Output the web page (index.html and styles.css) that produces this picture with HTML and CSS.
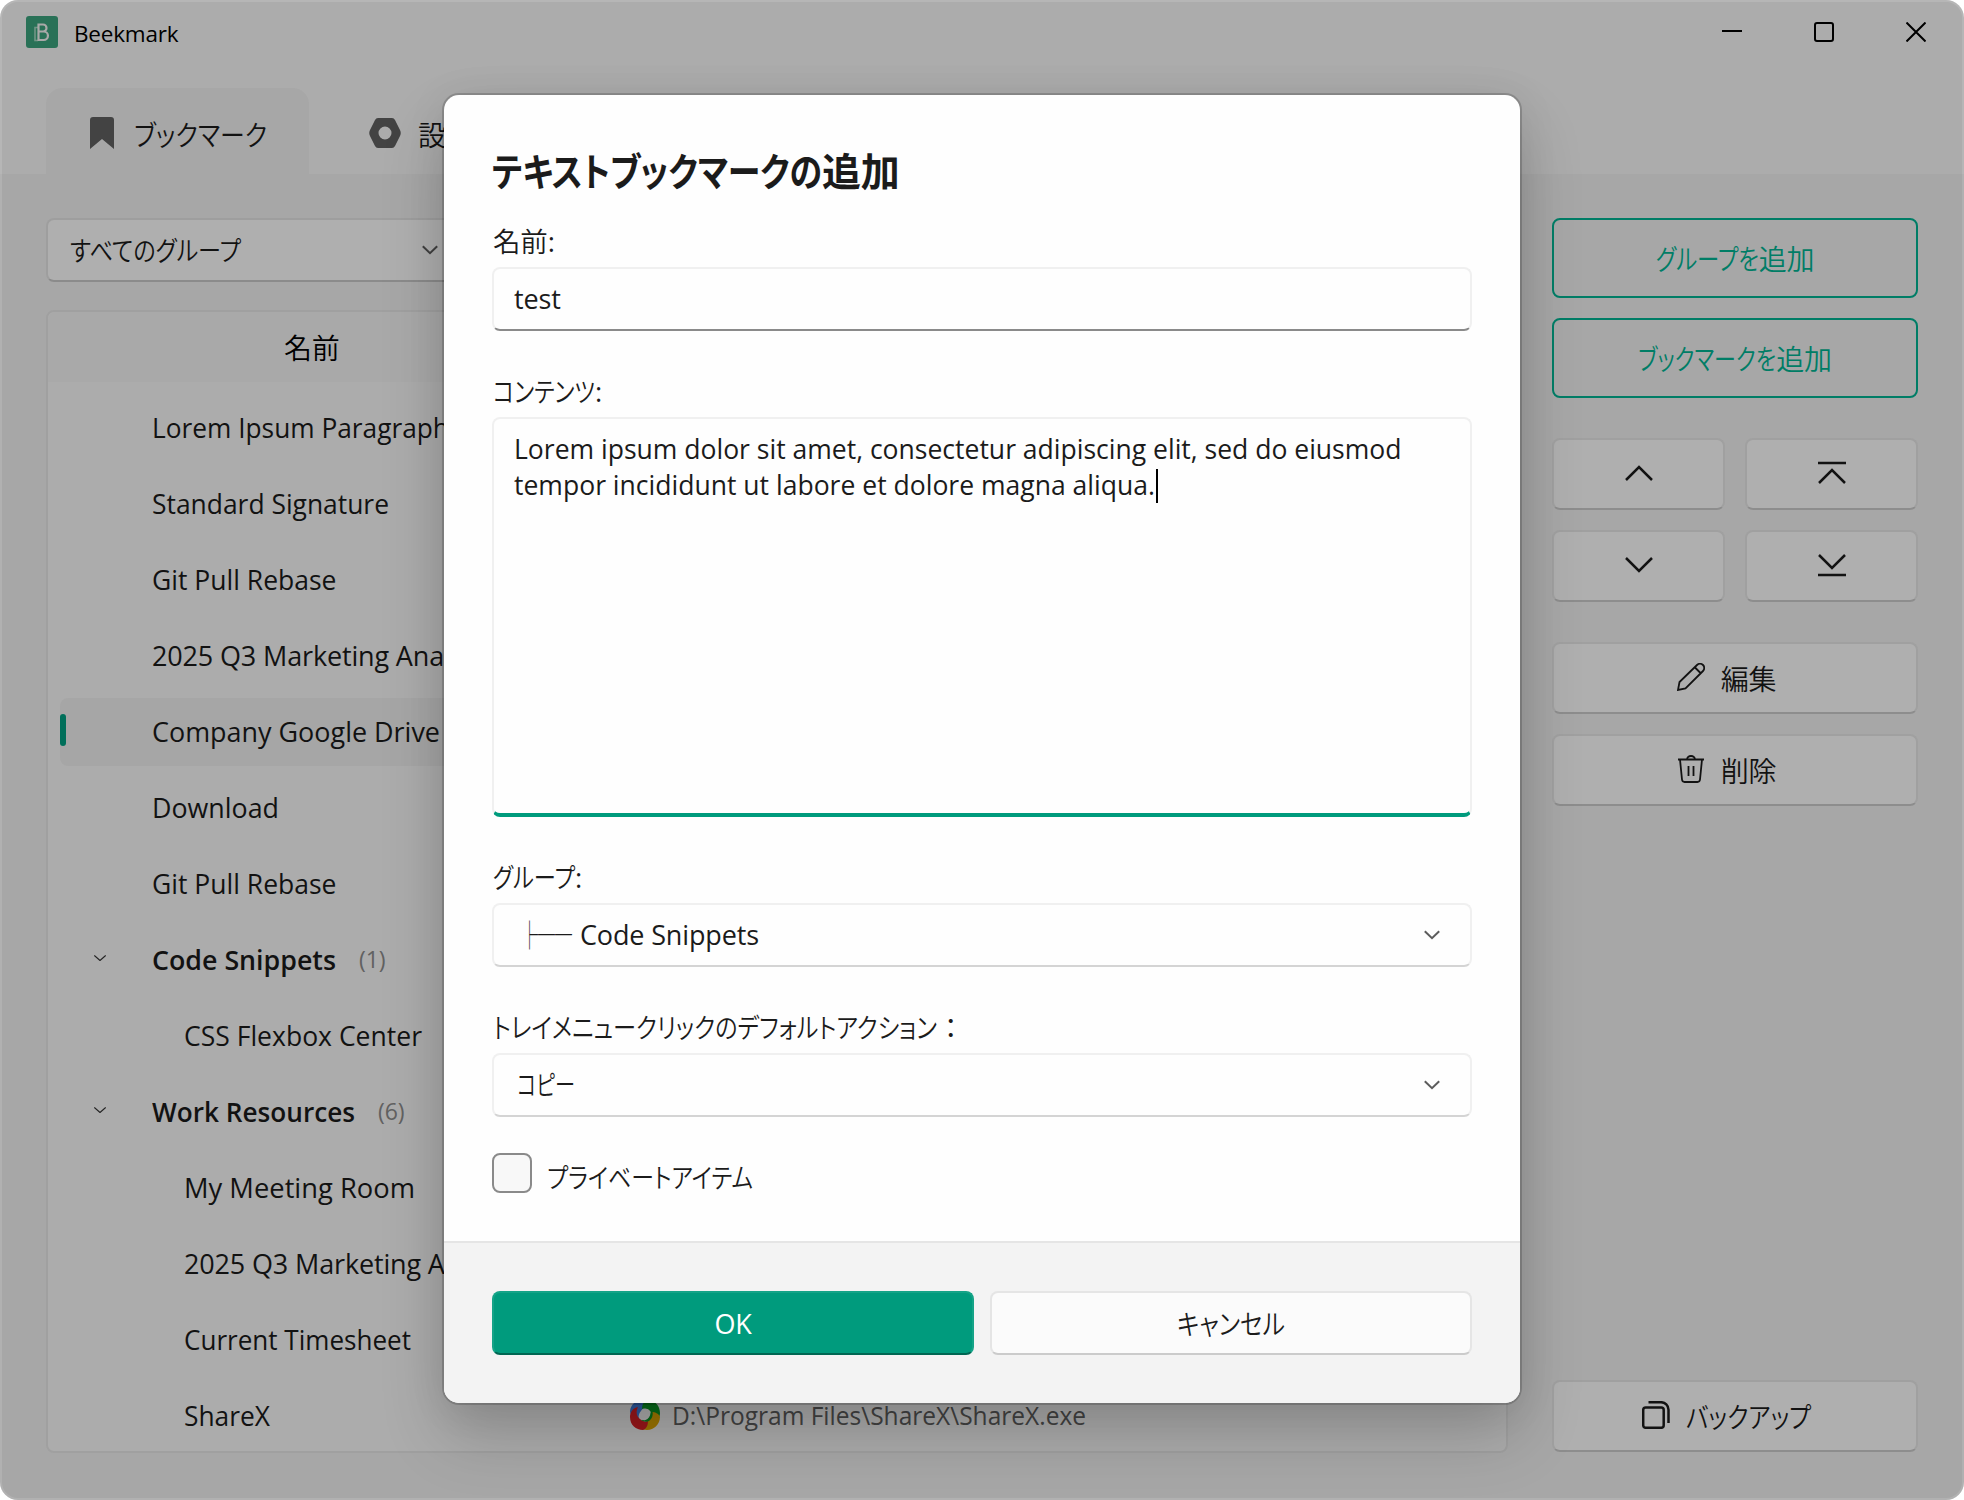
FILE: index.html
```html
<!DOCTYPE html>
<html lang="ja">
<head>
    <meta charset="UTF-8">
    <title>Beekmark</title>
    <link rel="stylesheet" href="styles.css">
</head>
<body>

<div class="window">
    <header class="titlebar">
        <svg class="logo" viewBox="0 0 32 32">
            <rect width="32" height="32" rx="3" fill="#3ca37d"/>
            <path d="M12 11.500H9v13H12" fill="none" stroke="#a3d6c1" stroke-width="1.600"/>
            <path d="M12.500 8.500h4.500a3.500 3.500 0 0 1 0 7h-4.500zM12.500 15.500h5.200a4.200 4.200 0 0 1 0 8.500h-5.200z" fill="none" stroke="#f2f2f2" stroke-width="2.200"/>
        </svg>
        <span class="app-name">Beekmark</span>
        <div class="controls">
            <svg viewBox="0 0 20 20"><path d="M0 9h20" stroke="#000" stroke-width="2"/></svg>
            <svg viewBox="0 0 20 20"><rect x="1" y="1" width="18" height="18" rx="2" fill="none" stroke="#000" stroke-width="2"/></svg>
            <svg viewBox="0 0 20 20"><path d="M.5.5l19 19M19.5.5l-19 19" stroke="#000" stroke-width="2"/></svg>
        </div>
    </header>

    <nav class="tabs">
        <div class="tab active">
            <svg class="mark" viewBox="0 0 24 32"><path d="M0 32V3a3 3 0 0 1 3-3h18a3 3 0 0 1 3 3v29L12 22z" fill="#606060"/></svg>
            <span class="fit jp" data-w="133">ブックマーク</span>
        </div>
        <div class="tab">
            <svg class="nut" viewBox="0 0 32 30"><path fill-rule="evenodd" d="M9 0h14q2 0 3 2l5 10q1.500 3 0 6l-5 10q-1 2-3 2H9q-2 0-3-2L1 18q-1.500-3 0-6L6 2q1-2 3-2zM16 8.500a6.500 6.500 0 1 0 0 13a6.500 6.500 0 1 0 0-13z" fill="#606060"/></svg>
            <span class="jp">設定</span>
        </div>
    </nav>

    <main class="content">
        <section class="list-side">
            <div class="select group-filter">
                <span class="fit jp" data-w="171">すべてのグループ</span>
                <svg class="chevron" viewBox="0 0 16 10"><path d="M.8 1.200L8 8.200l7.200-7"/></svg>
            </div>
            <div class="list">
                <div class="list-head"><span class="jp">名前</span></div>
                <ul class="rows">
                    <li class="row"><span class="fit" data-w="297">Lorem Ipsum Paragraph</span></li>
                    <li class="row"><span class="fit" data-w="237">Standard Signature</span></li>
                    <li class="row"><span class="fit" data-w="184.5">Git Pull Rebase</span></li>
                    <li class="row">2025 Q3 Marketing Analysis</li>
                    <li class="row selected"><span class="fit" data-w="288">Company Google Drive</span></li>
                    <li class="row"><span class="fit" data-w="127">Download</span></li>
                    <li class="row"><span class="fit" data-w="184.5">Git Pull Rebase</span></li>
                    <li class="row group"><svg class="toggle" viewBox="0 0 12 6"><path d="M.3.5L6 5.500 11.700.5"/></svg><b class="fit" data-w="184">Code Snippets</b><span class="count">(1)</span></li>
                    <li class="row child"><span class="fit" data-w="238">CSS Flexbox Center</span></li>
                    <li class="row group"><svg class="toggle" viewBox="0 0 12 6"><path d="M.3.5L6 5.500 11.700.5"/></svg><b class="fit" data-w="203">Work Resources</b><span class="count">(6)</span></li>
                    <li class="row child"><span class="fit" data-w="231">My Meeting Room</span></li>
                    <li class="row child">2025 Q3 Marketing Analysis</li>
                    <li class="row child"><span class="fit" data-w="227">Current Timesheet</span></li>
                    <li class="row child">
                        <div class="name"><span class="fit" data-w="86">ShareX</span></div>
                        <svg class="sharex" viewBox="0 0 32 32">
                            <path d="M1 12C2 5 8 0 15 1c5 1 8 4 9 8-4-2-10-1-12 3-2 2-3 5-2 8-5 0-9-4-9-8z" fill="#3f7fe0"/>
                            <path d="M19 1c7 0 12 6 12 13 0 5-3 9-8 10 2-4 2-9-2-12-2-2-5-3-8-2 0-5 2-8 6-9z" fill="#0a9a25"/>
                            <path d="M31 18c0 7-6 13-13 13-5 0-9-3-10-8 4 2 9 2 12-2 2-2 3-5 2-8 5 0 8 2 9 5z" fill="#e0a800"/>
                            <path d="M14 31C7 31 1 26 1 18c0-5 3-9 8-10-2 4-2 9 2 12 2 2 5 3 8 2 0 5-2 8-5 9z" fill="#dc2226"/>
                            <path d="M22 9c3 5 2 10-2 13-2 1-5 1-8-1 4 0 8-3 9-6 1-2 1-4 1-6z" fill="#0a9a25"/>
                            <ellipse cx="16" cy="15.500" rx="5" ry="6" transform="rotate(35 16 15.500)" fill="#f7f7f7"/>
                        </svg>
                        <span class="path fit" data-w="414">D:\Program Files\ShareX\ShareX.exe</span>
                    </li>
                </ul>
            </div>
        </section>

        <aside class="actions">
            <div class="btn outline"><span class="fit jp" data-w="103">グループを</span><span class="jp">追加</span></div>
            <div class="btn outline"><span class="fit jp" data-w="138">ブックマークを</span><span class="jp">追加</span></div>
            <div class="moves">
                <div class="btn"><svg class="arrow" viewBox="0 0 28 28"><path d="M1 21L14 8l13 13"/></svg></div>
                <div class="btn"><svg class="arrow" viewBox="0 0 28 28"><path d="M0 4h28M1 24l13-13 13 13"/></svg></div>
                <div class="btn"><svg class="arrow" viewBox="0 0 28 28"><path d="M1 7l13 13L27 7"/></svg></div>
                <div class="btn"><svg class="arrow" viewBox="0 0 28 28"><path d="M1 4l13 13L27 4M0 24h28"/></svg></div>
            </div>
            <div class="btn with-icon">
                <svg viewBox="0 0 28 28"><path d="M1 27l1.500-8L20 2a4 4 0 0 1 6 6L8.500 25.500zM18 4.500l5.500 5.500"/></svg>
                <span class="jp">編集</span>
            </div>
            <div class="btn with-icon">
                <svg viewBox="0 0 28 28"><path d="M1 4.500h26M10 4.500a4 3.500 0 0 1 8 0M3 4.500l2 20q.3 2.500 2.500 2.500h13q2.200 0 2.500-2.500l2-20M11.500 11v10M16.500 11v10"/></svg>
                <span class="jp">削除</span>
            </div>
            <div class="btn with-icon backup">
                <svg viewBox="0 0 28 28"><rect x="1.200" y="6.500" width="20.500" height="20.300" rx="2.500"/><path d="M6.500 1.200H19a7.500 7.500 0 0 1 7.500 7.500V22"/></svg>
                <span class="fit jp" data-w="125">バックアップ</span>
            </div>
        </aside>
    </main>
</div>

<div class="overlay">
    <div class="dialog">
        <div class="dialog-body">
            <h1><span class="fit" data-w="330">テキストブックマークの</span><span>追加</span></h1>

            <label><span class="jp">名前</span>:</label>
            <div class="field">test</div>

            <label><span class="fit jp" data-w="102">コンテンツ</span>:</label>
            <div class="field area"><span class="fit" data-w="887.5">Lorem ipsum dolor sit amet, consectetur adipiscing elit, sed do eiusmod</span><br><span class="fit" data-w="641">tempor incididunt ut labore et dolore magna aliqua.</span><i class="caret"></i></div>

            <label><span class="fit jp" data-w="82">グループ</span>:</label>
            <div class="select">
                <span class="branch fit" data-w="51">├──</span><span class="value">Code Snippets</span>
                <svg class="chevron" viewBox="0 0 16 10"><path d="M.8 1.200L8 8.200l7.200-7"/></svg>
            </div>

            <label><span class="fit jp" data-w="444">トレイメニュークリックのデフォルトアクション</span><span class="jp">：</span></label>
            <div class="select">
                <span class="fit jp value" data-w="58">コピー</span>
                <svg class="chevron" viewBox="0 0 16 10"><path d="M.8 1.200L8 8.200l7.200-7"/></svg>
            </div>

            <div class="check">
                <span class="box"></span>
                <span class="fit jp" data-w="206">プライベートアイテム</span>
            </div>
        </div>
        <div class="dialog-foot">
            <div class="btn primary">OK</div>
            <div class="btn"><span class="fit jp" data-w="108">キャンセル</span></div>
        </div>
    </div>
</div>

<script src="fit.js"></script>
</body>
</html>
```
FILE: styles.css
```css
* {
    box-sizing: border-box;
}
body {
    margin: 0;
    width: 1964px;
    height: 1500px;
    overflow: hidden;
    background-color: #ffffff;
    font-family: "Open Sans", "Noto Sans CJK JP", sans-serif;
    font-size: 27px;
    letter-spacing: -0.15px;
    color: #1b1b1b;
}
.fit {
    display: inline-block;
    white-space: nowrap;
    transform-origin: 0 50%;
    font-feature-settings: "palt";
    letter-spacing: 0;
}
.jp {
    font-family: "Noto Sans CJK JP", sans-serif;
    font-weight: 350;
    line-height: 36px;
}
svg {
    display: block;
    flex: none;
}

/* Main window */
.window {
    height: 1500px;
    border-radius: 18px;
    overflow: hidden;
    display: flex;
    flex-direction: column;
    background-color: #f7f7f7;
}
.titlebar {
    flex: none;
    height: 64px;
    display: flex;
    align-items: center;
    padding: 0 2px 0 26px;
    color: #000000;
}
.logo {
    width: 32px;
    height: 32px;
}
.app-name {
    margin-left: 16px;
    font-size: 22.5px;
    letter-spacing: -0.2px;
    padding-top: 3px;
}
.controls {
    margin-left: auto;
    display: flex;
}
.controls svg {
    width: 20px;
    height: 20px;
    margin: 0 36px;
}
.tabs {
    flex: none;
    height: 110px;
    padding: 24px 0 0 46px;
    display: flex;
}
.tab {
    height: 86px;
    display: flex;
    align-items: center;
    padding: 3px 42px 0 60px;
    font-size: 28px;
}
.tab.active {
    width: 263px;
    padding: 3px 0 0 44px;
    background-color: #f0f0f0;
    border-radius: 16px 16px 0 0;
}
.tab .jp {
    padding-top: 2px;
}
.mark {
    width: 24px;
    height: 32px;
    margin: 0 20px 0 0;
}
.nut {
    width: 32px;
    height: 30px;
    margin: 0 17px 0 0;
}
.content {
    flex: 1;
    min-height: 0;
    display: flex;
    gap: 44px;
    padding: 44px 46px 47px;
    background-color: #f0f0f0;
}

/* Bookmark list */
.list-side {
    flex: 1;
    display: flex;
    flex-direction: column;
    gap: 28px;
}
.select {
    flex: none;
    height: 64px;
    display: flex;
    align-items: center;
    padding: 0 30px 0 23px;
    border: 2px solid #f0f0f0;
    border-bottom-color: #d4d4d4;
    border-radius: 8px;
    background-color: #fefefe;
}
.group-filter {
    width: 424px;
    padding-left: 22px;
    background-color: #fbfbfb;
    border-color: #e3e3e3;
    border-bottom-color: #c8c8c8;
}
.chevron {
    width: 16px;
    height: 10px;
    margin-left: auto;
    fill: none;
    stroke: #5c5c5c;
    stroke-width: 2;
}
.list {
    flex: 1;
    min-height: 0;
    border: 2px solid #e5e5e5;
    border-radius: 8px;
    background-color: #f7f7f7;
}
.list-head {
    height: 70px;
    padding-left: 236px;
    display: flex;
    align-items: center;
    font-size: 28px;
    color: #000000;
    background-color: #f2f2f2;
    border-radius: 8px 8px 0 0;
}
.rows {
    list-style: none;
    margin: 0;
    padding: 12px 12px 0;
    display: flex;
    flex-direction: column;
    gap: 8px;
}
.row {
    height: 68px;
    display: flex;
    align-items: center;
    padding: 0 0 2px 92px;
    border-radius: 8px;
}
.row.child {
    padding-left: 124px;
}
.row.group {
    padding-left: 34px;
}
.row.group b {
    font-weight: 600;
}
.row.selected {
    padding-left: 0;
    background-color: #eeeeee;
}
.row.selected::before {
    content: "";
    width: 6px;
    height: 32px;
    margin: 0 86px 2px 0;
    border-radius: 3px;
    background-color: #00a082;
}
.toggle {
    width: 12px;
    height: 6px;
    margin: 0 46px 3px 0;
    fill: none;
    stroke: #333333;
    stroke-width: 1.2;
}
.count {
    margin-left: 23px;
    font-size: 23px;
    color: #8c8c8c;
}
.name {
    width: 445px;
}
.sharex {
    width: 32px;
    height: 32px;
}
.path {
    margin-left: 11px;
    font-size: 26px;
    color: #606060;
}

/* Right side buttons */
.actions {
    width: 366px;
    display: flex;
    flex-direction: column;
    gap: 20px;
    padding-bottom: 1px;
}
.btn {
    height: 72px;
    display: flex;
    align-items: center;
    justify-content: center;
    border: 2px solid #e5e5e5;
    border-bottom-color: #cbcbcb;
    border-radius: 8px;
    background-color: #fbfbfb;
    font-size: 28px;
}
.btn.outline {
    height: 80px;
    border-color: #00b493;
    background-color: transparent;
    color: #00b493;
}
.moves {
    display: grid;
    grid-template-columns: 1fr 1fr;
    gap: 20px;
    margin: 20px 0;
}
.arrow {
    width: 28px;
    height: 28px;
    margin-bottom: 3px;
    fill: none;
    stroke: #1b1b1b;
    stroke-width: 2.5;
}
.with-icon {
    padding: 0 17px 1px 0;
    gap: 16px;
}
.with-icon svg {
    width: 28px;
    height: 28px;
    margin-bottom: 2px;
    fill: none;
    stroke: #1b1b1b;
    stroke-width: 1.8;
}
.backup {
    margin-top: auto;
}
.backup svg {
    stroke-width: 2.5;
}

/* Dimmed layer and dialog */
.overlay {
    position: absolute;
    top: 0;
    left: 0;
    width: 1964px;
    height: 1500px;
    display: flex;
    justify-content: center;
    align-items: flex-start;
    padding-top: 95px;
    border-radius: 18px;
    overflow: hidden;
    background-color: rgba(0, 0, 0, 0.3);
    box-shadow: inset 0 0 0 2px rgba(255, 255, 255, 0.12);
}
.dialog {
    width: 1076px;
    height: 1308px;
    display: flex;
    flex-direction: column;
    border-radius: 15px;
    background-color: #fefefe;
    box-shadow: 0 0 0 2px rgba(0, 0, 0, 0.17), 0 32px 64px rgba(0, 0, 0, 0.19), 0 4px 40px rgba(0, 0, 0, 0.08);
}
.dialog-body {
    flex: 1;
    display: flex;
    flex-direction: column;
    padding: 46px 48px 0;
}
.dialog h1 {
    margin: 0;
    height: 60px;
    line-height: 60px;
    font-size: 39px;
    font-weight: 600;
    white-space: nowrap;
}
.dialog label {
    height: 66px;
    line-height: 38px;
    padding: 21px 0 0 1px;
    font-size: 27.5px;
    white-space: nowrap;
}
.field {
    height: 64px;
    line-height: 36px;
    padding: 12px 20px;
    border: 2px solid #f0f0f0;
    border-bottom-color: #8a8a8a;
    border-radius: 8px;
}
.field + label,
.select + label {
    height: 86px;
    padding-top: 41px;
}
.field.area {
    height: 400px;
    border-bottom: 4px solid #009b7d;
    white-space: nowrap;
}
.caret {
    display: inline-block;
    width: 2px;
    height: 34px;
    margin: 0 0 -8px 1px;
    background-color: #000000;
}
.branch {
    font-family: "Noto Sans CJK JP", monospace;
    font-weight: 350;
    font-size: 28px;
    line-height: 28px;
    margin: 0 8px 2px 4px;
}
.value {
    padding-bottom: 2px;
}
.check {
    display: flex;
    align-items: flex-start;
    gap: 15px;
    margin-top: 36px;
}
.check .jp {
    padding-top: 6px;
}
.box {
    width: 40px;
    height: 40px;
    border: 2px solid #8a8a8a;
    border-radius: 8px;
    background-color: #f8f8f8;
}
.dialog-foot {
    height: 162px;
    display: flex;
    gap: 16px;
    padding: 48px;
    border-top: 2px solid #e5e5e5;
    border-radius: 0 0 15px 15px;
    background-color: #f3f3f3;
}
.dialog-foot .btn {
    flex: 1;
    height: 64px;
}
.dialog-foot .primary {
    background-color: #009b7d;
    border-color: #14a387;
    border-bottom-color: #006652;
    color: #ffffff;
    font-size: 27px;
}
```
FILE: fit.js
```js
// Narrow the labels to their UI widths
document.querySelectorAll('.fit').forEach(function (el) {
    const target = Number(el.dataset.w);
    const natural = el.getBoundingClientRect().width;
    el.style.width = target + 'px';
    el.style.transform = 'scaleX(' + target / natural + ')';
});
```
